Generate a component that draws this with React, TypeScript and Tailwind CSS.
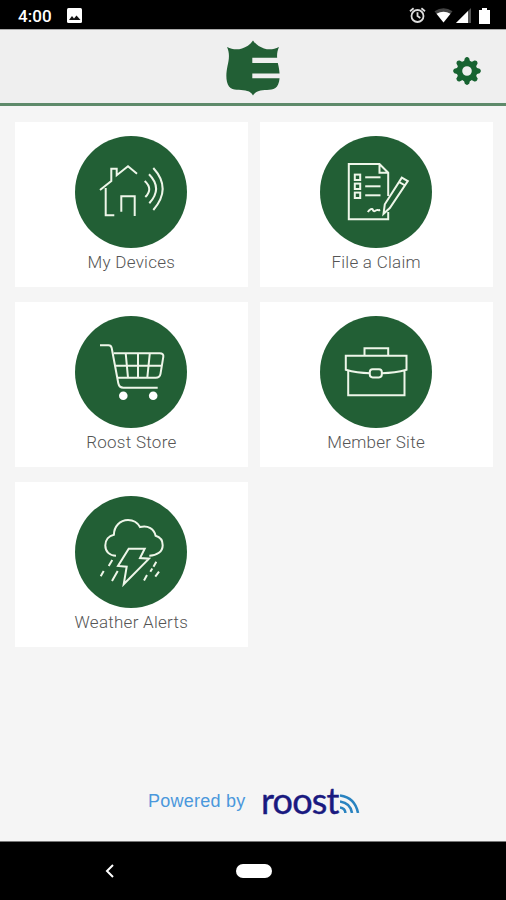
import type { ReactNode } from 'react'

type Tile = { label: string; icon: ReactNode }

function HouseIcon() {
  return (
    <>
      <path d="M25 54 36.3 45V32.7h5.4v6.6L53 30.3l9 7.4M30.7 52v27.3h8.6M46.3 75.7V60.3h13.4V80" />
      <path d="M69.7 45Q78.5 53 70.3 61M74 38.3Q88 52.5 74.3 67.3M78.3 32Q97 52.5 78.3 74" />
    </>
  )
}

function ClaimIcon() {
  return (
    <>
      <path d="M68.2 60V36.7L59.5 28H28.8v55.3h39.4V76M59.5 28v8.7h8.7" />
      {[41.3, 50.3, 59.3].map((y) => (
        <g key={y}>
          <rect x="34.8" y={y - 2.7} width="5.4" height="5.4" />
          <path d={`M45.2 ${y}h15.3`} />
        </g>
      ))}
      <path d="M47.8 76c2-3 4.5-4 5-2.2.4 1.8 2 1.6 3.5.5 1-.7 1.7.2 3.9-.3M63.5 77.8l1.3-9.5 17-26.6 6 3.3-18 27ZM79 46l6 3.4" />
    </>
  )
}

function CartIcon() {
  return (
    <>
      <path d="M25 29.3h8.5q2.6 0 3.2 2.7l6.6 35.3q.9 4.4 5 4.4h34.4" />
      <path d="M38.7 37.3h46q4.2 0 3.6 3.5l-2.8 17q-.7 3.9-4.7 3.9H42.3M40.5 49.7h46M50.7 37.3 53 61.7M63 37.3v24.4M74.8 37.3l-2.5 24.4" />
      <circle cx="48.3" cy="79.7" r="4.3" fill="#fff" stroke="none" />
      <circle cx="78.2" cy="79.7" r="4.3" fill="#fff" stroke="none" />
    </>
  )
}

function BriefcaseIcon() {
  return (
    <>
      <path d="M44.5 39.7v-7.4h23.7v7.4M49.8 57.2Q37 57 25.8 53.8V39.7h60.7v14.1Q75 57 61.8 57.2M28.2 54.8v24.5h56.3V54.8" />
      <rect x="49.8" y="53.2" width="12" height="8.2" rx="2.8" />
    </>
  )
}

function StormIcon() {
  return (
    <>
      <path d="M41 59.7C34.5 59.7 30.3 55.5 30.3 49.5c0-5.5 3.5-9.7 8.6-10.8C39 30.5 45 24 53 24c5.2 0 9.6 2.7 12 7 8-2.2 14.3 2 15.6 8.8 4.7 1.4 7.1 4.7 7.1 9.4 0 6.3-5.6 10.5-13.4 10.5" />
      <path d="M53.7 52.7h16L65 62l9 .7-25.3 25.6 3-17.6-8.7-.7Z" />
      <path d="m37.3 64-3.6 6M28.7 75l-3 5.3M42.7 75 37 85M81.3 65.7l-2.8 5M77.3 72.5l-2 3.2M72 79l-3 5.5M84 75.7l-3.7 5" />
    </>
  )
}

const tiles: Tile[] = [
  { label: 'My Devices', icon: <HouseIcon /> },
  { label: 'File a Claim', icon: <ClaimIcon /> },
  { label: 'Roost Store', icon: <CartIcon /> },
  { label: 'Member Site', icon: <BriefcaseIcon /> },
  { label: 'Weather Alerts', icon: <StormIcon /> },
]

function TileCard({ label, icon }: Tile) {
  return (
    <button type="button" className="flex h-[165px] flex-col items-center bg-white pt-[14px]">
      <svg viewBox="0 0 112 112" className="h-28 w-28 shrink-0" fill="none">
        <circle cx="56" cy="56" r="56" fill="#225f35" />
        <g stroke="#eef6e9" strokeWidth="2">
          {icon}
        </g>
      </svg>
      <span className="mt-[3px] text-[17px] leading-[22px] font-light tracking-[0.27px] text-[#555]">{label}</span>
    </button>
  )
}

function StatusBar() {
  return (
    <div className="flex h-[29px] items-center bg-black pr-4 pl-[18px] text-white">
      <span className="mt-[4px] text-[17px] font-medium tracking-[0.1px]">4:00</span>
      <svg className="mt-[2px] ml-[15px] h-[15px] w-[15px]" viewBox="0 0 15 15">
        <rect width="15" height="15" rx="1.5" fill="#fff" />
        <path d="m2 12 3-4 2 2.5 2.5-3 4 4.5Z" fill="#111" />
      </svg>
      <div className="mt-[2px] ml-auto flex items-center">
        <svg className="h-[17px] w-[17px]" viewBox="0 0 17 17" fill="none" stroke="#ddd" strokeWidth="1.8">
          <circle cx="8.5" cy="9" r="6" />
          <path d="M8.5 5.2V9l2.8 2M1 4.2 4.6 1.3M16 4.2l-3.6-2.9" />
        </svg>
        <svg className="ml-2 h-[15px] w-[19px]" viewBox="0 0 19 15">
          <path d="M.5 3.2Q9.5-2.5 18.5 3.2L9.5 14.5Z" fill="#444" />
          <path d="M2.5 5.8q7-4 14 0l-7 8.7Z" fill="#fff" />
        </svg>
        <svg className="ml-[3px] h-[15px] w-[15px]" viewBox="0 0 15 15">
          <path d="M15 0v15H0Z" fill="#555" />
          <path d="M12 3v12H0Z" fill="#fff" />
        </svg>
        <svg className="ml-[8px] h-[16px] w-[11px]" viewBox="0 0 11 16">
          <path d="M0 2h3V0h5v2h3v14H0Z" fill="#fff" />
        </svg>
      </div>
    </div>
  )
}

function ShieldLogo() {
  return (
    <svg className="h-[56px] w-[54px]" viewBox="0 0 54 56">
      <path
        d="M27 .5C30 5 34 7 38 8.5 43 10 48 9.5 53 7 50 13 51 20 52.500 26 54 33 54.500 42 51 46.500 47 51 40 49.500 34.500 50.500 30 51.500 28.500 53 27 55.500 25.500 53 24 51.500 19.500 50.500 14 49.500 7 51 3 46.500-.5 42 0 33 1.500 26 3 20 4 13 1 7 6 9.500 11 10 16 8.500 20 7 24 5 27 .5Z"
        fill="#225f35"
      />
      <path d="M26.3 17.7H54v5.2H26.3ZM26.3 33.5H54v4.7H26.3Z" fill="#efefef" />
    </svg>
  )
}

function GearIcon() {
  return (
    <svg className="h-7 w-7" viewBox="-14 -14 28 28" fill="#176331">
      {[0, 45, 90, 135, 180, 225, 270, 315].map((a) => (
        <path key={a} d="M-3.4-8.5-2.2-12.6Q0-15.2 2.2-12.6L3.4-8.5Z" transform={`rotate(${a})`} />
      ))}
      <circle r="7.6" fill="none" stroke="#176331" strokeWidth="5.6" />
    </svg>
  )
}

function RoostLogo() {
  return (
    <div className="ml-[13px] flex items-end">
      <span className="mb-[2px] w-[79px] font-['Lato',sans-serif] text-[36px] leading-[44px] tracking-[-0.8px] text-[#1a1a80] [-webkit-text-stroke:0.4px_#1a1a80]">
        roost
      </span>
      <svg className="mb-[11px] h-[19px] w-5" viewBox="0 0 20 19" fill="none" stroke="#2983c0" strokeWidth="2.6">
        <path d="M0 13.5q5 .5 5.5 5.500M0 7.5q10.5 1.5 12 11.500M0 1.5Q15 3.5 18 19" />
      </svg>
    </div>
  )
}

export default function App() {
  return (
    <div className="flex h-[900px] w-[506px] flex-col overflow-hidden bg-[#f5f5f5] font-['Roboto',sans-serif]">
      <StatusBar />
      <header className="grid h-[77px] shrink-0 grid-cols-[1fr_54px_1fr] items-start border-t border-b-[3px] border-t-[#aaa] border-b-[#5e8a6a] bg-[#efefef] pt-[10px]">
        <div className="col-start-2">
          <ShieldLogo />
        </div>
        <button type="button" aria-label="Settings" className="mt-[17px] mr-[25px] justify-self-end">
          <GearIcon />
        </button>
      </header>
      <main className="flex flex-1 flex-col">
        <div className="grid grid-cols-2 gap-x-3 gap-y-[15px] pt-[16px] pr-[13.5px] pl-[15px]">
          {tiles.map((tile) => (
            <TileCard key={tile.label} {...tile} />
          ))}
        </div>
        <footer className="mt-auto mb-[18px] flex h-[44px] items-center pl-[148px]">
          <span className="w-[100px] font-['Liberation_Sans',sans-serif] text-[18px] tracking-[0.25px] whitespace-nowrap text-[#4b98dc]">
            Powered by
          </span>
          <RoostLogo />
        </footer>
      </main>
      <nav className="flex h-[59px] shrink-0 items-center border-t border-[#777] bg-black">
        <svg className="ml-[105px] h-[14px] w-[9px]" viewBox="0 0 9 14" fill="none" stroke="#fff" strokeWidth="2">
          <path d="M8 1 2 7l6 6" />
        </svg>
        <span className="ml-[122px] h-[14px] w-9 rounded-full bg-white" />
      </nav>
    </div>
  )
}
